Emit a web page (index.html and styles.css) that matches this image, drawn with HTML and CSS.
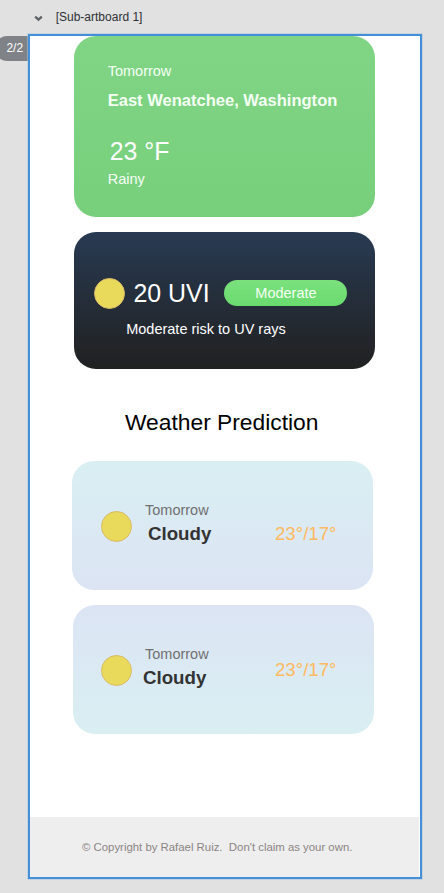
FILE: index.html
```html
<!DOCTYPE html>
<html lang="en">
<head>
<meta charset="utf-8">
<title>Weather</title>
<link rel="stylesheet" href="styles.css">
</head>
<body>
<header class="topbar">
  <svg class="chevron" width="9" height="7" viewBox="0 0 9 7"><path d="M1.2 1.6 L4.5 4.6 L7.8 1.6" fill="none" stroke="#5f6468" stroke-width="2.4"/></svg>
  <span class="title">[Sub-artboard 1]</span>
</header>
<div class="workspace">
  <div class="page-count">2/2</div>
  <main class="artboard">
    <section class="card today">
      <div class="label">Tomorrow</div>
      <div class="city">East Wenatchee, Washington</div>
      <div class="temperature">23 °F</div>
      <div class="label">Rainy</div>
    </section>
    <section class="card uv">
      <div class="uv-row">
        <span class="sun"></span>
        <span class="uv-value">20 UVI</span>
        <span class="pill">Moderate</span>
      </div>
      <div class="uv-note">Moderate risk to UV rays</div>
    </section>
    <h1 class="heading">Weather Prediction</h1>
    <section class="card forecast first">
      <span class="sun"></span>
      <div class="info">
        <div class="day">Tomorrow</div>
        <div class="condition">Cloudy</div>
      </div>
      <div class="range">23°/17°</div>
    </section>
    <section class="card forecast second">
      <span class="sun"></span>
      <div class="info">
        <div class="day">Tomorrow</div>
        <div class="condition">Cloudy</div>
      </div>
      <div class="range">23°/17°</div>
    </section>
    <footer class="footer">© Copyright by Rafael Ruiz.&nbsp; Don't claim as your own.</footer>
  </main>
</div>
</body>
</html>
```
FILE: styles.css
```css
* { box-sizing: border-box; }
body {
  margin: 0;
  height: 893px;
  overflow: hidden;
  background: #e1e1e1;
  font-family: "Liberation Sans", Arial, sans-serif;
  white-space: nowrap;
}
.topbar {
  display: flex;
  align-items: center;
  height: 34px;
  padding-left: 34px;
}
.chevron { display: block; margin-top: 3px; }
.title { margin-left: 12.7px; color: #2d3035; font-size: 12px; line-height: 14px; }
.workspace { display: flex; align-items: flex-start; }
.page-count {
  width: 33px;
  height: 25px;
  margin: 2px 0 0 -5px;
  padding-left: 11.4px;
  border-radius: 12px 0 0 12px;
  background: #7f8286;
  color: #fff;
  font-size: 12px;
  line-height: 25px;
}
.artboard {
  display: flex;
  flex-direction: column;
  width: 393.5px;
  height: 845px;
  border: 2px solid #438fd8;
  background: #fff;
  box-shadow: 0 0 0 0.5px #a9c5e0;
}
.card { width: 300.6px; margin-left: 44.2px; border-radius: 22px; flex: none; }
.today {
  height: 181px;
  padding: 26px 33.5px 0;
  background: linear-gradient(#80d585, #77cf7b);
  color: #f5fff5;
}
.label { font-size: 14.5px; line-height: 18px; }
.city { margin-top: 11px; font-size: 16.55px; line-height: 20px; font-weight: bold; }
.temperature { margin: 25px 0 0 2px; color: #fff; font-size: 24.9px; line-height: 30px; }
.temperature + .label { margin-top: 4px; }
.uv {
  height: 136.5px;
  margin-top: 15px;
  padding: 46px 0 0 20px;
  background: linear-gradient(#283a52, #212121);
}
.sun {
  flex: none;
  width: 31px;
  height: 31px;
  border: 1px solid #d9ba66;
  border-radius: 50%;
  background: #e9da5c;
}
.uv-row { display: flex; align-items: center; height: 31px; }
.uv-value { width: 91px; margin: 0 0 1px 8.3px; color: #fff; font-size: 24.9px; line-height: 30px; }
.pill {
  width: 123px;
  height: 26px;
  margin-bottom: 1px;
  border-radius: 13px;
  background: linear-gradient(#7be17e, #69db6d);
  color: #f5fff5;
  font-size: 14.5px;
  line-height: 26px;
  text-align: center;
}
.uv-note { margin: 11px 0 0 32px; color: #fff; font-size: 14.5px; line-height: 18px; }
.heading { margin: 39.5px 0 0 95px; color: #000; font-size: 22.8px; line-height: 28px; font-weight: normal; }
.forecast { display: flex; height: 129px; padding-right: 36px; }
.forecast .sun { margin-top: 50px; }
.first { margin: 25px 0 0 42px; padding-left: 29px; background: linear-gradient(#d9eff2, #dce4f4); }
.second { margin: 15px 0 0 43px; padding-left: 28px; padding-right: 37px; background: linear-gradient(#dce4f4, #d9eff2); }
.info { margin: 40px 0 0 13px; }
.day { color: #707070; font-size: 14.5px; line-height: 18px; }
.condition { margin: 4px 0 0 3px; color: #333; font-size: 18.7px; line-height: 22px; font-weight: bold; }
.second .condition { margin-left: -2px; }
.range { margin: 62px 0 0 auto; color: #ffb95e; font-size: 18.7px; line-height: 22px; }
.second .range { margin-top: 54px; }
.footer {
  height: 60px;
  margin: auto 1px 0 0;
  padding-left: 52px;
  background: #eee;
  color: #8b8583;
  font-size: 11.38px;
  line-height: 60px;
}
```
